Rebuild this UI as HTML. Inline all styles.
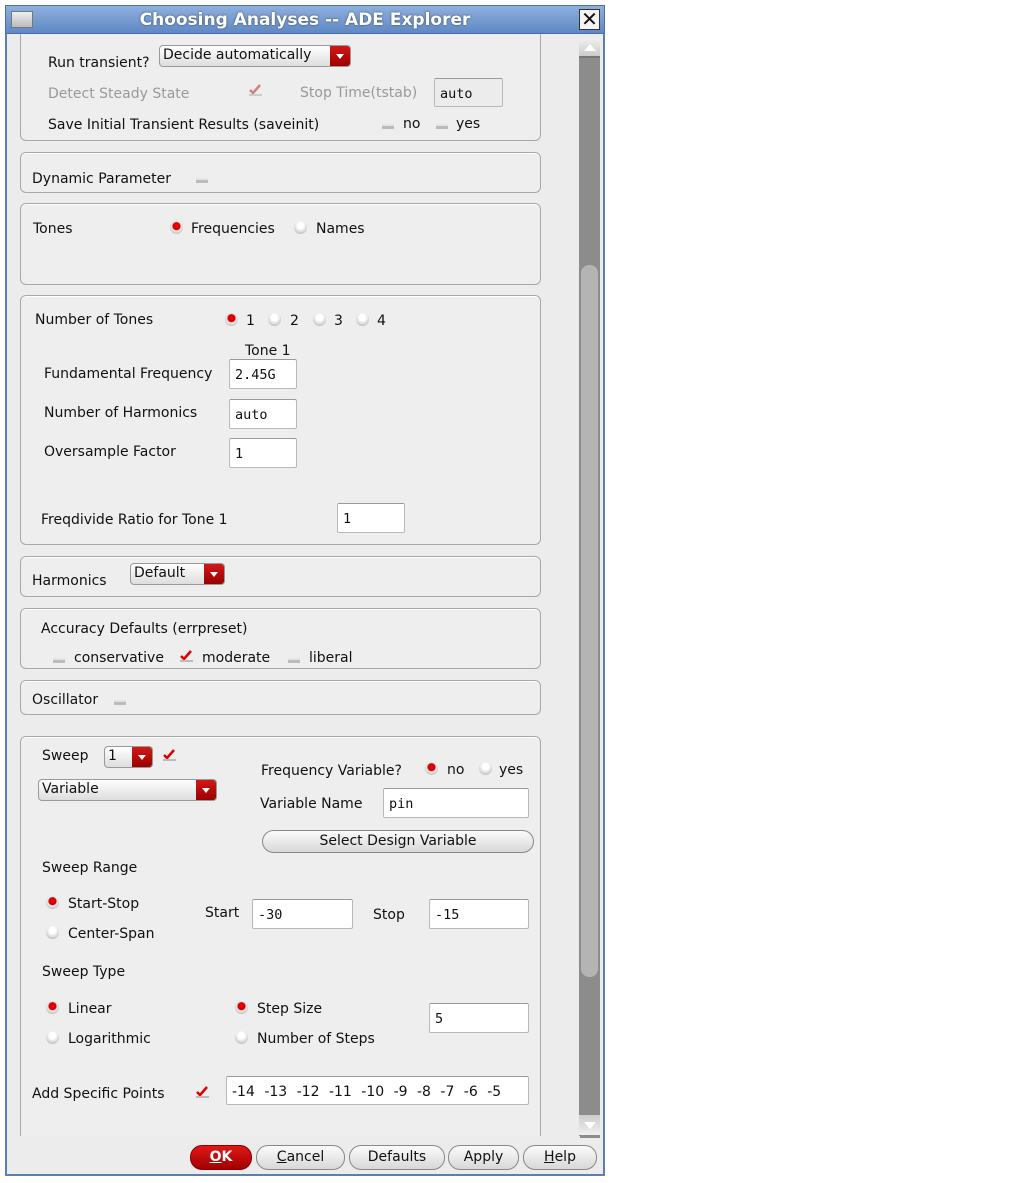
<!DOCTYPE html>
<html><head><meta charset="utf-8"><style>
*{margin:0;padding:0;box-sizing:border-box}
body{width:1013px;height:1183px;background:#fff;position:relative;overflow:hidden;font-family:"DejaVu Sans","Liberation Sans",sans-serif;font-size:14px;color:#111}
.a{position:absolute;white-space:nowrap;line-height:16px}
.win{position:absolute;left:5px;top:5px;width:600px;height:1171px;background:#ececec;border:2px solid #5a7fb5;border-top:none}
.title{position:absolute;left:5px;top:5px;width:600px;height:29px;background:linear-gradient(#8fb0dc,#5f88c4);border:1px solid #4a6fa8}
.panel{position:absolute;left:20px;width:521px;border:1px solid #a8a8a8;border-radius:6px;background:#eeeeee;box-shadow:inset 0 1px 0 #fff}
.in{position:absolute;background:#fff;border:1px solid #b8b8b8;border-top-color:#999;border-radius:2px;font-family:"DejaVu Sans Mono","Liberation Mono",monospace;font-size:13.5px;line-height:16px;padding:7px 4px 0 5px}
.dd{position:absolute;height:22px;border:1px solid #999;border-radius:4px;background:linear-gradient(#fff,#ddd);line-height:19px;padding-left:3px;overflow:hidden}
.dd b{position:absolute;right:0;top:0;width:20px;height:100%;background:linear-gradient(#d21818,#9a0000)}
.dd b:after{content:"";position:absolute;left:6px;top:8px;border-left:4px solid transparent;border-right:4px solid transparent;border-top:5px solid #fff}
.rb{position:absolute;width:13px;height:13px;border-radius:50%;background:radial-gradient(circle at 50% 35%,#fff 30%,#ccc 70%,#999 100%)}
.rb.on{background:radial-gradient(circle at 50% 40%,#f00 0,#c00 35%,#eee 45%,#bbb 80%,#888 100%)}
.cb{position:absolute;width:12px;height:10px;border-bottom:3px solid #bbb;background:linear-gradient(transparent 60%,#ddd)}
.ck{position:absolute;width:13px;height:12px}
.btn{position:absolute;top:1145px;height:25px;border:1px solid #888;border-radius:12px;background:linear-gradient(#fbfbfb,#d8d8d8);text-align:center;line-height:23px;font-size:14px}
</style></head><body>
<div class="win"></div>

<!-- panel 1 -->
<div class="panel" style="top:20px;height:121px"></div>
<div class="title"></div>
<div style="position:absolute;left:11px;top:11px;width:22px;height:17px;background:linear-gradient(#eee,#bbb);border:1px solid #777"></div>
<div class="a" style="left:0;width:610px;text-align:center;top:10px;font-size:17px;font-weight:bold;color:#fff;line-height:20px;text-shadow:0 0 2px #345">Choosing Analyses -- ADE Explorer</div>
<div style="position:absolute;left:579px;top:9px;width:21px;height:21px;background:#f4f4f4;border:1px solid #333;font:bold 20px/19px 'DejaVu Sans',sans-serif;text-align:center">✕</div>

<!-- scrollbar -->
<div style="position:absolute;left:579px;top:38px;width:21px;height:1100px;background:#8c8c8c"></div>
<div style="position:absolute;left:579px;top:38px;width:21px;height:20px;background:linear-gradient(#f0f0f0,#ccc);border-bottom:2px solid #777"></div>
<div style="position:absolute;left:584px;top:44px;border-left:6px solid transparent;border-right:6px solid transparent;border-bottom:7px solid #fff"></div>
<div style="position:absolute;left:581px;top:265px;width:17px;height:712px;background:#b4b4b4;border-radius:8px"></div>
<div style="position:absolute;left:579px;top:1115px;width:21px;height:20px;background:linear-gradient(#ccc,#f0f0f0)"></div>
<div style="position:absolute;left:584px;top:1122px;border-left:6px solid transparent;border-right:6px solid transparent;border-top:7px solid #fff"></div>

<div class="a" style="left:48px;top:55px">Run transient?</div>
<div class="dd" style="left:159px;top:45px;width:192px">Decide automatically<b></b></div>
<div class="a" style="left:48px;top:86px;color:#999">Detect Steady State</div>
<svg class="ck" style="left:249px;top:84px" viewBox="0 0 13 12"><path d="M1 6l3 3 7-8" stroke="#d08080" stroke-width="2.5" fill="none"/><rect x="0" y="10" width="13" height="2" fill="#ccc"/></svg>
<div class="a" style="left:300px;top:85px;color:#999">Stop Time(tstab)</div>
<div class="in" style="left:434px;top:78px;width:69px;height:29px;background:#ececec">auto</div>
<div class="a" style="left:48px;top:117px">Save Initial Transient Results (saveinit)</div>
<div class="cb" style="left:382px;top:119px"></div><div class="a" style="left:403px;top:116px">no</div>
<div class="cb" style="left:436px;top:119px"></div><div class="a" style="left:456px;top:116px">yes</div>

<div class="panel" style="top:152px;height:41px"></div>
<div class="a" style="left:32px;top:171px">Dynamic Parameter</div><div class="cb" style="left:196px;top:173px"></div>

<div class="panel" style="top:203px;height:82px"></div>
<div class="a" style="left:33px;top:221px">Tones</div>
<div class="rb on" style="left:170px;top:221px"></div><div class="a" style="left:191px;top:221px">Frequencies</div>
<div class="rb" style="left:294px;top:221px"></div><div class="a" style="left:316px;top:221px">Names</div>

<div class="panel" style="top:295px;height:250px"></div>
<div class="a" style="left:35px;top:312px">Number of Tones</div>
<div class="rb on" style="left:225px;top:313px"></div><div class="a" style="left:246px;top:313px">1</div>
<div class="rb" style="left:268px;top:313px"></div><div class="a" style="left:290px;top:313px">2</div>
<div class="rb" style="left:313px;top:313px"></div><div class="a" style="left:334px;top:313px">3</div>
<div class="rb" style="left:356px;top:313px"></div><div class="a" style="left:377px;top:313px">4</div>
<div class="a" style="left:245px;top:343px">Tone 1</div>
<div class="a" style="left:44px;top:366px">Fundamental Frequency</div>
<div class="in" style="left:229px;top:359px;width:68px;height:30px">2.45G</div>
<div class="a" style="left:44px;top:405px">Number of Harmonics</div>
<div class="in" style="left:229px;top:399px;width:68px;height:30px">auto</div>
<div class="a" style="left:44px;top:444px">Oversample Factor</div>
<div class="in" style="left:229px;top:438px;width:68px;height:30px">1</div>
<div class="a" style="left:41px;top:512px">Freqdivide Ratio for Tone 1</div>
<div class="in" style="left:337px;top:503px;width:68px;height:30px">1</div>

<div class="panel" style="top:556px;height:41px"></div>
<div class="a" style="left:32px;top:573px">Harmonics</div>
<div class="dd" style="left:130px;top:563px;width:95px">Default<b></b></div>

<div class="panel" style="top:608px;height:61px"></div>
<div class="a" style="left:41px;top:621px">Accuracy Defaults (errpreset)</div>
<div class="cb" style="left:53px;top:653px"></div><div class="a" style="left:74px;top:650px">conservative</div>
<svg class="ck" style="left:180px;top:650px" viewBox="0 0 13 12"><path d="M1 6l3 3 7-8" stroke="#d00" stroke-width="2.5" fill="none"/><rect x="0" y="10" width="13" height="2" fill="#bbb"/></svg>
<div class="a" style="left:202px;top:650px">moderate</div>
<div class="cb" style="left:288px;top:653px"></div><div class="a" style="left:309px;top:650px">liberal</div>

<div class="panel" style="top:680px;height:35px"></div>
<div class="a" style="left:32px;top:692px">Oscillator</div><div class="cb" style="left:114px;top:695px"></div>

<div class="panel" style="top:736px;height:420px;border-bottom:none;border-radius:6px 6px 0 0"></div>
<div style="position:absolute;left:14px;top:1136px;width:566px;height:37px;background:#ececec"></div>
<div class="a" style="left:42px;top:748px">Sweep</div>
<div class="dd" style="left:104px;top:746px;width:49px">1<b></b></div>
<svg class="ck" style="left:163px;top:749px" viewBox="0 0 13 12"><path d="M1 6l3 3 7-8" stroke="#d00" stroke-width="2.5" fill="none"/><rect x="0" y="10" width="13" height="2" fill="#bbb"/></svg>
<div class="dd" style="left:38px;top:779px;width:179px">Variable<b></b></div>
<div class="a" style="left:261px;top:763px">Frequency Variable?</div>
<div class="rb on" style="left:425px;top:762px"></div><div class="a" style="left:447px;top:762px">no</div>
<div class="rb" style="left:479px;top:762px"></div><div class="a" style="left:499px;top:762px">yes</div>
<div class="a" style="left:260px;top:796px">Variable Name</div>
<div class="in" style="left:383px;top:788px;width:146px;height:30px">pin</div>
<div class="btn" style="left:262px;top:830px;width:272px;height:23px;line-height:21px;font-size:14px">Select Design Variable</div>
<div class="a" style="left:42px;top:860px">Sweep Range</div>
<div class="rb on" style="left:46px;top:896px"></div><div class="a" style="left:68px;top:896px">Start-Stop</div>
<div class="rb" style="left:46px;top:926px"></div><div class="a" style="left:68px;top:926px">Center-Span</div>
<div class="a" style="left:205px;top:905px">Start</div>
<div class="in" style="left:252px;top:899px;width:101px;height:30px">-30</div>
<div class="a" style="left:373px;top:907px">Stop</div>
<div class="in" style="left:429px;top:899px;width:100px;height:30px">-15</div>
<div class="a" style="left:42px;top:964px">Sweep Type</div>
<div class="rb on" style="left:46px;top:1001px"></div><div class="a" style="left:68px;top:1001px">Linear</div>
<div class="rb" style="left:46px;top:1031px"></div><div class="a" style="left:68px;top:1031px">Logarithmic</div>
<div class="rb on" style="left:235px;top:1001px"></div><div class="a" style="left:257px;top:1001px">Step Size</div>
<div class="rb" style="left:235px;top:1031px"></div><div class="a" style="left:257px;top:1031px">Number of Steps</div>
<div class="in" style="left:429px;top:1003px;width:100px;height:30px">5</div>
<div class="a" style="left:32px;top:1086px">Add Specific Points</div>
<svg class="ck" style="left:196px;top:1086px" viewBox="0 0 13 12"><path d="M1 6l3 3 7-8" stroke="#d00" stroke-width="2.5" fill="none"/><rect x="0" y="10" width="13" height="2" fill="#bbb"/></svg>
<div class="in" style="left:226px;top:1076px;width:303px;height:29px;padding-left:5px;font-family:'DejaVu Sans',sans-serif;font-size:14px;word-spacing:5px">-14 -13 -12 -11 -10 -9 -8 -7 -6 -5</div>

<div class="btn" style="left:190px;width:62px;background:linear-gradient(#e01818,#a00000);color:#fff;font-weight:bold;border-color:#800"><u>O</u>K</div>
<div class="btn" style="left:256px;width:89px"><u>C</u>ancel</div>
<div class="btn" style="left:349px;width:96px">Defaults</div>
<div class="btn" style="left:448px;width:71px">Apply</div>
<div class="btn" style="left:523px;width:74px"><u>H</u>elp</div>
</body></html>
